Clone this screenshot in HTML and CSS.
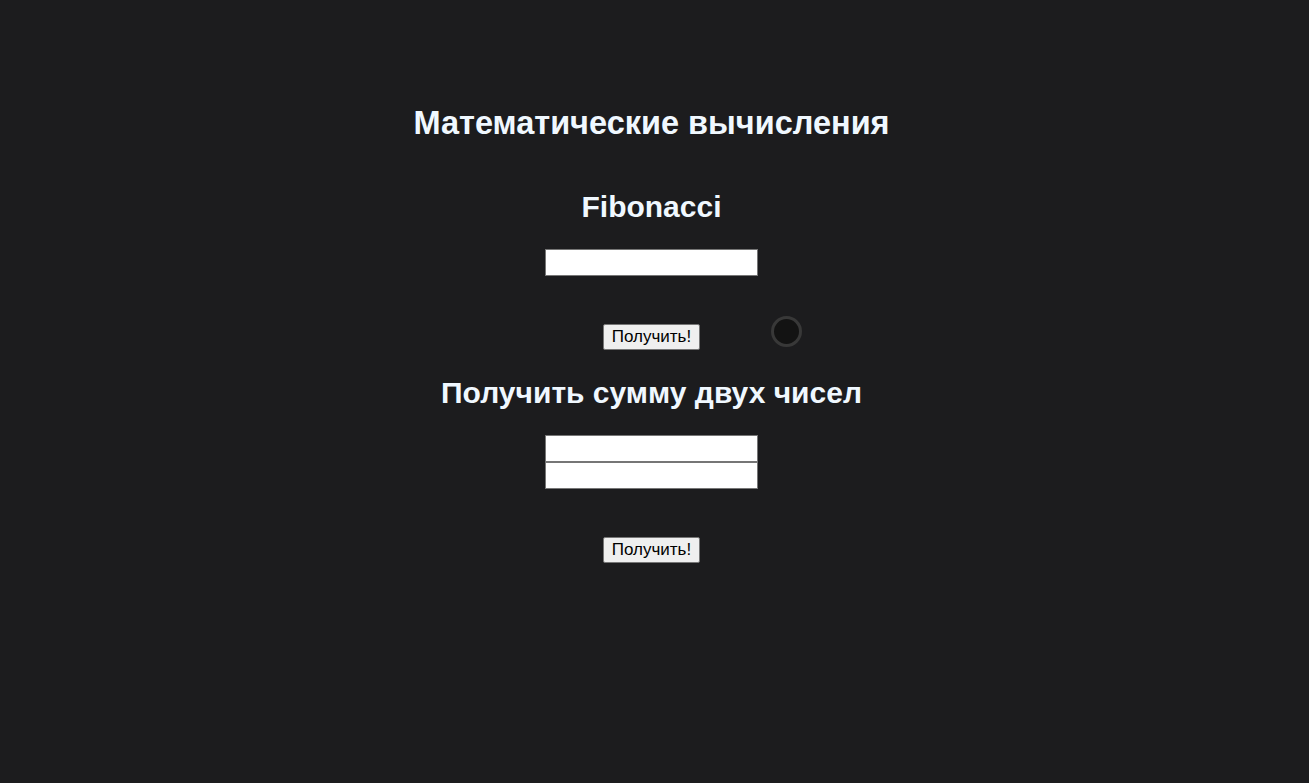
FILE: index.html
```html
<!DOCTYPE html>
<html lang="ru">
<head>
<meta charset="utf-8">
<title>Математические вычисления</title>
<link rel="stylesheet" href="styles.css">
</head>
<body>
<main class="page">
  <h1 class="title">Математические вычисления</h1>
  <section class="block block-fib">
    <h2 class="block-title">Fibonacci</h2>
    <input class="field" type="text">
    <div class="actions">
      <button class="btn" type="button">Получить!</button>
      <span class="spinner"></span>
    </div>
  </section>
  <section class="block block-sum">
    <h2 class="block-title">Получить сумму двух чисел</h2>
    <input class="field" type="text">
    <input class="field" type="text">
    <div class="actions">
      <button class="btn" type="button">Получить!</button>
    </div>
  </section>
</main>
</body>
</html>
```
FILE: styles.css
```css
html, body {
  margin: 0;
  padding: 0;
  height: 100%;
  background: #1c1c1e;
}
body {
  font-family: "Liberation Sans", Arial, sans-serif;
  color: #f0f8ff;
}
.page {
  display: flex;
  flex-direction: column;
  align-items: center;
  padding: 105px 6px 0 0;
}
.title {
  margin: 0;
  font-size: 32.5px;
  line-height: 37px;
  font-weight: bold;
}
.block {
  display: flex;
  flex-direction: column;
  align-items: center;
}
.block-fib {
  margin-top: 48px;
}
.block-sum {
  margin-top: 26px;
}
.block-title {
  margin: 0 0 25px;
  font-size: 30px;
  line-height: 34px;
  font-weight: bold;
}
.block-sum .block-title {
  margin-bottom: 25px;
}
.field {
  box-sizing: border-box;
  width: 213px;
  height: 27px;
  margin: 0;
  padding: 1px 2px;
  border: 1px solid #767676;
  background: #ffffff;
  font-family: "Liberation Sans", Arial, sans-serif;
  font-size: 16px;
}
.actions {
  position: relative;
  margin-top: 48px;
}
.btn {
  box-sizing: border-box;
  height: 26px;
  margin: 0;
  padding: 2px 8px;
  border: 1px solid #767676;
  border-radius: 2px;
  background: #efefef;
  color: #000000;
  font-family: "Liberation Sans", Arial, sans-serif;
  font-size: 17px;
  line-height: 20px;
}
.spinner {
  position: absolute;
  left: calc(100% + 71px);
  top: -8px;
  box-sizing: border-box;
  width: 31px;
  height: 31px;
  border: 3px solid #383838;
  border-radius: 50%;
  background: #131313;
}
```
